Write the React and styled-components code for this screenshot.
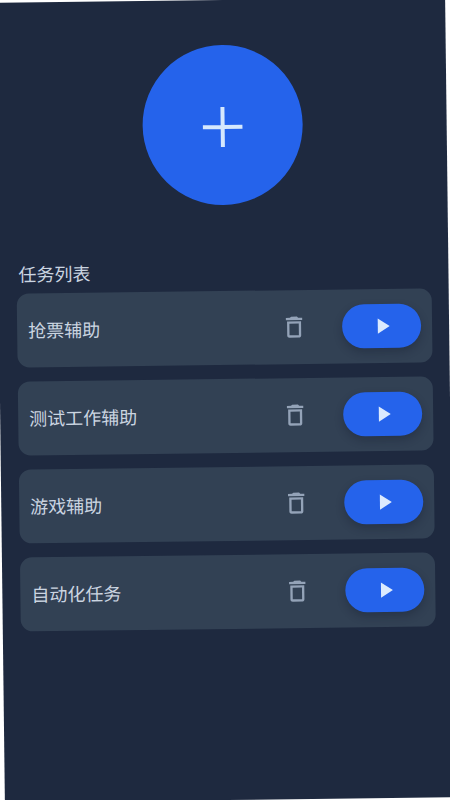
import React, { useState } from "react"
import styled, { createGlobalStyle } from "styled-components"
import { MdDeleteOutline, MdPlayArrow } from "react-icons/md"

const GlobalStyle = createGlobalStyle`
  * {
    box-sizing: border-box;
  }

  body {
    margin: 0;
    background: #ffffff;
    font-family: "Noto Sans CJK SC", "Noto Sans", sans-serif;
  }
`

// Clips the corners of the tilted screen
const Stage = styled.div`
  min-height: 100vh;
  overflow: hidden;
`

const Screen = styled.main`
  min-height: 100vh;
  padding: 45px 17px 40px 18px;
  background: #1e293f;
  transform: rotate(-0.7deg);
`

const AddButton = styled.button`
  display: flex;
  align-items: center;
  justify-content: center;
  width: 160px;
  height: 160px;
  margin: 0 auto 52px;
  padding: 3px 0 0;
  border: 0;
  border-radius: 50%;
  background: #2563eb;
  color: #d6e8fd;
  cursor: pointer;
`

const Heading = styled.h1`
  margin: 0 0 6px;
  padding-left: 2px;
  color: #cbd5e1;
  font-size: 18px;
  font-weight: 400;
  line-height: 28px;
`

const TaskList = styled.ul`
  display: flex;
  flex-direction: column;
  gap: 14px;
  margin: 0;
  padding: 0;
  list-style: none;
`

const TaskCard = styled.li`
  display: flex;
  align-items: center;
  min-height: 74px;
  padding: 12px 11px;
  border-radius: 12px;
  background: #324154;
`

const TaskName = styled.span`
  flex: 1;
  padding-bottom: 2px;
  color: #cbd5e1;
  font-size: 18px;
  line-height: 28px;
`

const DeleteButton = styled.button`
  display: flex;
  align-items: center;
  justify-content: center;
  width: 48px;
  height: 48px;
  margin-right: 24px;
  padding: 0;
  border: 0;
  background: transparent;
  color: #94a3b8;
  font-size: 28px;
  cursor: pointer;
`

const PlayButton = styled.button`
  display: flex;
  align-items: center;
  justify-content: center;
  width: 79px;
  height: 44px;
  padding: 0;
  border: 0;
  border-radius: 22px;
  background: #2563eb;
  color: #dbeafe;
  font-size: 26px;
  box-shadow: 0 4px 8px rgba(15, 23, 42, 0.3);
  cursor: pointer;
`

const PlusIcon = () => (
  <svg width="40" height="40" viewBox="0 0 40 40" aria-hidden="true">
    <path d="M20 0v40M0 20h40" stroke="currentColor" strokeWidth="4" />
  </svg>
)

const initialTasks = ["抢票辅助", "测试工作辅助", "游戏辅助", "自动化任务"]

const App = () => {
  const [tasks, setTasks] = useState(initialTasks)

  const removeTask = name => setTasks(tasks.filter(task => task !== name))

  return (
    <Stage>
      <GlobalStyle />
      <Screen>
        <AddButton type="button" aria-label="添加任务">
          <PlusIcon />
        </AddButton>
        <Heading>任务列表</Heading>
        <TaskList>
          {tasks.map(task => (
            <TaskCard key={task}>
              <TaskName>{task}</TaskName>
              <DeleteButton
                type="button"
                aria-label={`删除${task}`}
                onClick={() => removeTask(task)}
              >
                <MdDeleteOutline />
              </DeleteButton>
              <PlayButton type="button" aria-label={`运行${task}`}>
                <MdPlayArrow />
              </PlayButton>
            </TaskCard>
          ))}
        </TaskList>
      </Screen>
    </Stage>
  )
}

export default App
